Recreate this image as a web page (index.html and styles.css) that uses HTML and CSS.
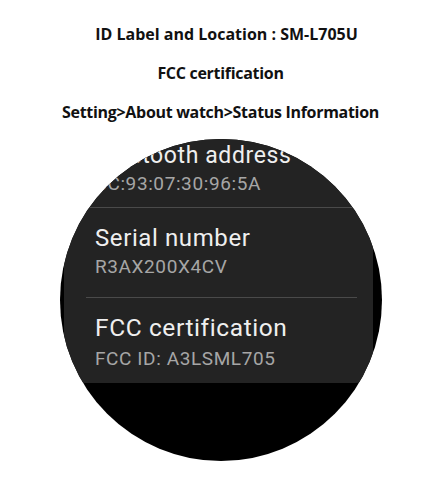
FILE: index.html
```html
<!DOCTYPE html>
<html>
<head>
<meta charset="utf-8">
<link rel="stylesheet" href="styles.css">
</head>
<body>
<div class="header">
  <p class="hline hline-first">ID Label and Location : SM-L705U</p>
  <p class="hline hline-tight">FCC certification</p>
  <p class="hline hline-tight">Setting&gt;About watch&gt;Status Information</p>
</div>
<div class="watch">
  <div class="card">
    <div class="row row-top">
      <div class="title title-bt">Bluetooth address</div>
      <div class="value">BC:93:07:30:96:5A</div>
    </div>
    <div class="divider"></div>
    <div class="row row-mid">
      <div class="title">Serial number</div>
      <div class="value">R3AX200X4CV</div>
    </div>
    <div class="divider"></div>
    <div class="row row-last">
      <div class="title title-fcc">FCC certification</div>
      <div class="value">FCC ID: A3LSML705</div>
    </div>
  </div>
</div>
</body>
</html>
```
FILE: styles.css
```css
html, body {
  margin: 0;
  padding: 0;
  background: #ffffff;
}
body {
  width: 435px;
  height: 480px;
  overflow: hidden;
}
.header {
  padding: 15px 0 0 6px;
  font-family: "Open Sans", "Noto Sans", sans-serif;
  font-weight: 700;
  font-size: 16px;
  color: #111111;
  text-align: center;
}
.hline {
  margin: 0;
  height: 39px;
  line-height: 39px;
  white-space: nowrap;
}
.hline-first {
  padding-left: 12px;
}
.hline-tight {
  letter-spacing: -0.3px;
}
.watch {
  margin: 7px 0 0 60px;
  width: 322px;
  height: 322px;
  border-radius: 50%;
  background: #000000;
  overflow: hidden;
}
.card {
  margin-left: 4px;
  width: 309px;
  height: 244px;
  background: #232323;
  border-radius: 0 0 18px 18px;
  font-family: Roboto, "Liberation Sans", sans-serif;
  letter-spacing: 0.6px;
}
.row {
  display: flex;
  flex-direction: column;
  padding-left: 31px;
}
.row-top {
  padding-top: 3px;
  padding-bottom: 12px;
  gap: 3px;
}
.row-mid {
  padding-top: 16px;
  padding-bottom: 19px;
  gap: 4px;
}
.row-last {
  padding-top: 16px;
  padding-bottom: 13px;
  gap: 6px;
}
.title {
  font-size: 24px;
  line-height: 28px;
  color: #efefef;
  white-space: nowrap;
}
.title-bt {
  font-size: 23px;
}
.title-fcc {
  font-size: 24.5px;
}
.value {
  font-size: 19px;
  line-height: 22px;
  color: #a6a6a6;
  white-space: nowrap;
}
.divider {
  height: 1px;
  margin: 0 16px 0 22px;
  background: #4a4a4a;
}
```
